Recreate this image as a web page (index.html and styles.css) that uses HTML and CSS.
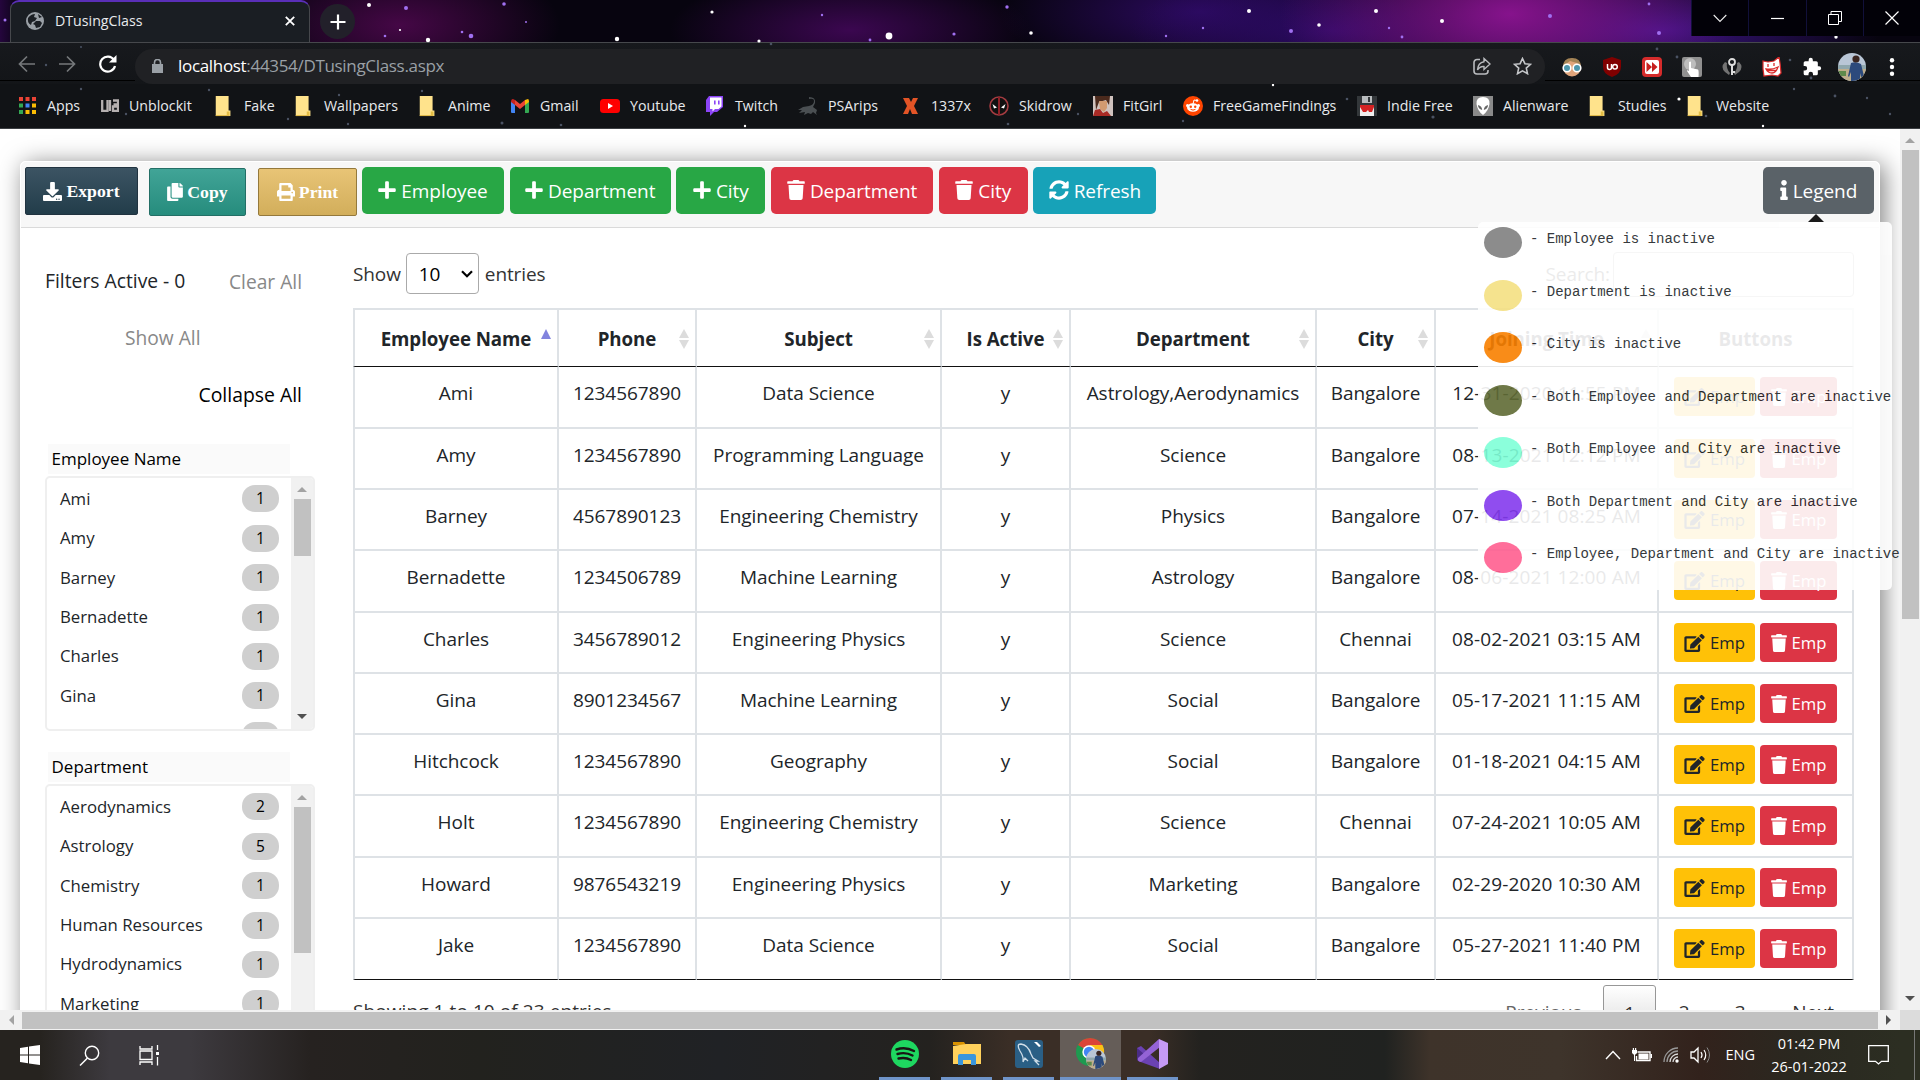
FILE: index.html
```
<!DOCTYPE html>
<html lang="en">
<head>
<meta charset="utf-8">
<title>DTusingClass</title>
<link rel="stylesheet" href="styles.css">
</head>
<body>
<svg class="defs" width="0" height="0" aria-hidden="true">
  <symbol id="plus" viewBox="0 0 448 512"><path d="M416 208H272V64c0-17.67-14.33-32-32-32h-32c-17.67 0-32 14.33-32 32v144H32c-17.67 0-32 14.33-32 32v32c0 17.67 14.33 32 32 32h144v144c0 17.67 14.33 32 32 32h32c17.67 0 32-14.33 32-32V304h144c17.67 0 32-14.33 32-32v-32c0-17.67-14.33-32-32-32z"/></symbol>
  <symbol id="trash" viewBox="0 0 448 512"><path d="M432 32H312l-9.4-18.7A24 24 0 0 0 281.1 0H166.8a23.72 23.72 0 0 0-21.4 13.3L136 32H16A16 16 0 0 0 0 48v32a16 16 0 0 0 16 16h416a16 16 0 0 0 16-16V48a16 16 0 0 0-16-16zM53.2 467a48 48 0 0 0 47.9 45h245.8a48 48 0 0 0 47.9-45L416 128H32z"/></symbol>
  <symbol id="sync" viewBox="0 0 512 512"><path d="M370.72 133.28C339.458 104.008 298.888 87.962 255.848 88c-77.458.068-144.328 53.178-162.791 126.85-1.344 5.363-6.122 9.15-11.651 9.15H24.103c-7.498 0-13.194-6.807-11.807-14.176C33.933 94.924 134.813 8 256 8c66.448 0 126.791 26.136 171.315 68.685L463.03 40.97C478.149 25.851 504 36.559 504 57.941V192c0 13.255-10.745 24-24 24H345.941c-21.382 0-32.09-25.851-16.971-40.971l41.75-41.749zM32 296h134.059c21.382 0 32.09 25.851 16.971 40.971l-41.75 41.75c31.262 29.273 71.835 45.319 114.876 45.28 77.418-.07 144.315-53.144 162.787-126.849 1.344-5.363 6.122-9.15 11.651-9.15h57.304c7.498 0 13.194 6.807 11.807 14.176C478.067 417.076 377.187 504 256 504c-66.448 0-126.791-26.136-171.315-68.685L48.97 471.03C33.851 486.149 8 475.441 8 454.059V320c0-13.255 10.745-24 24-24z"/></symbol>
  <symbol id="info" viewBox="0 0 192 512"><path d="M20 424.229h20V279.771H20c-11.046 0-20-8.954-20-20V212c0-11.046 8.954-20 20-20h112c11.046 0 20 8.954 20 20v212.229h20c11.046 0 20 8.954 20 20V492c0 11.046-8.954 20-20 20H20c-11.046 0-20-8.954-20-20v-47.771c0-11.046 8.954-20 20-20zM96 0C56.235 0 24 32.235 24 72s32.235 72 72 72 72-32.235 72-72S135.764 0 96 0z"/></symbol>
  <symbol id="download" viewBox="0 0 512 512"><path d="M216 0h80c13.3 0 24 10.7 24 24v168h87.7c17.8 0 26.7 21.5 14.1 34.1L269.7 378.3c-7.5 7.5-19.8 7.5-27.3 0L90.1 226.1c-12.6-12.6-3.7-34.1 14.1-34.1H192V24c0-13.3 10.7-24 24-24zm296 376v112c0 13.3-10.7 24-24 24H24c-13.3 0-24-10.7-24-24V376c0-13.3 10.7-24 24-24h146.7l49 49c20.1 20.1 52.5 20.1 72.6 0l49-49H488c13.3 0 24 10.7 24 24zm-124 88c0-11-9-20-20-20s-20 9-20 20 9 20 20 20 20-9 20-20zm64 0c0-11-9-20-20-20s-20 9-20 20 9 20 20 20 20-9 20-20z"/></symbol>
  <symbol id="copy" viewBox="0 0 448 512"><path d="M320 448v40c0 13.255-10.745 24-24 24H24c-13.255 0-24-10.745-24-24V120c0-13.255 10.745-24 24-24h72v296c0 30.879 25.121 56 56 56h168zm0-344V0H152c-13.255 0-24 10.745-24 24v368c0 13.255 10.745 24 24 24h272c13.255 0 24-10.745 24-24V128H344c-13.2 0-24-10.8-24-24zm120.971-31.029L375.029 7.029A24 24 0 0 0 358.059 0H352v96h96v-6.059a24 24 0 0 0-7.029-16.97z"/></symbol>
  <symbol id="print" viewBox="0 0 512 512"><path d="M448 192V77.25c0-8.49-3.37-16.62-9.37-22.63L393.37 9.37c-6-6-14.14-9.37-22.63-9.37H96C78.33 0 64 14.33 64 32v160c-35.35 0-64 28.65-64 64v112c0 8.84 7.16 16 16 16h48v96c0 17.67 14.33 32 32 32h320c17.67 0 32-14.33 32-32v-96h48c8.84 0 16-7.16 16-16V256c0-35.35-28.65-64-64-64zm-64 256H128v-96h256v96zm0-224H128V64h192v48c0 8.84 7.16 16 16 16h48v96zm48 72c-13.25 0-24-10.75-24-24 0-13.26 10.75-24 24-24s24 10.74 24 24c0 13.25-10.75 24-24 24z"/></symbol>
  <symbol id="edit" viewBox="0 0 576 512"><path d="M402.6 83.2l90.2 90.2c3.8 3.8 3.8 10 0 13.8L274.4 405.6l-92.8 10.3c-12.4 1.4-22.9-9.1-21.5-21.5l10.3-92.8L388.8 83.2c3.8-3.8 10-3.8 13.8 0zm162-22.9l-48.8-48.8c-15.2-15.2-39.9-15.2-55.2 0l-35.4 35.4c-3.8 3.8-3.8 10 0 13.8l90.2 90.2c3.8 3.8 10 3.8 13.8 0l35.4-35.4c15.2-15.3 15.2-40 0-55.2zM384 346.2V448H64V128h229.8c3.2 0 6.2-1.3 8.5-3.5l40-40c7.6-7.6 2.2-20.5-8.5-20.5H48C21.5 64 0 85.5 0 112v352c0 26.5 21.5 48 48 48h352c26.5 0 48-21.5 48-48V306.2c0-10.7-12.9-16-20.5-8.5l-40 40c-2.2 2.3-3.5 5.3-3.5 8.5z"/></symbol>
  <symbol id="folder" viewBox="0 0 20 24"><path d="M1 1h14v16h2v6H1z" fill="#ffe38c"/><path d="M13 22v-4h3v4z" fill="#e3bd45"/><path d="M1 22h15v1H1z" fill="#d9b03c"/></symbol>
  <symbol id="avatar" viewBox="0 0 28 28"><clipPath id="round"><circle cx="14" cy="14" r="14"/></clipPath><g clip-path="url(#round)"><path fill="#b9c6d6" d="M0 0h28v28H0z"/><path fill="#8fa7ad" d="M0 12h28v4H0z"/><path fill="#bfae8c" d="M0 16h28v12H0z"/><path fill="#5f8a4c" d="M0 18h8v5H0z"/><path fill="#2c4a7c" d="M13 10q5-2 10 1l3 12-3 1-1-4v8h-9v-9l-2 5-1-1z"/><circle cx="18" cy="6" r="3.6" fill="#3a2520"/></g></symbol>
</svg>

<header class="chrome">
  <svg class="sky" viewBox="0 0 1920 129" width="1920" height="129" aria-hidden="true">
    <g fill="#fff">
      <circle cx="369" cy="5" r="2"/><circle cx="428" cy="40" r="2.2"/><circle cx="617" cy="39" r="2.2"/><circle cx="712" cy="12" r="1.6"/><circle cx="759" cy="41" r="1.6"/><circle cx="889" cy="36" r="3.4"/><circle cx="1031" cy="33" r="1.8"/><circle cx="1249" cy="11" r="2"/><circle cx="1319" cy="25" r="1.8"/><circle cx="1376" cy="11" r="2"/><circle cx="1442" cy="21" r="2"/><circle cx="1836" cy="37" r="1.7"/><circle cx="400" cy="30" r="1.1"/><circle cx="1273" cy="85" r="1.2"/><circle cx="1679" cy="99" r="1.6"/><circle cx="745" cy="126" r="1.2"/><circle cx="1763" cy="126" r="1.2"/>
    </g>
    <g fill="#a070f0">
      <circle cx="406" cy="8" r="2"/><circle cx="471" cy="36" r="2.3"/><circle cx="462" cy="32" r="1.3"/><circle cx="504" cy="4" r="1.8"/><circle cx="385" cy="36" r="1.3"/><circle cx="526" cy="22" r="1"/><circle cx="1007" cy="7" r="1.7"/><circle cx="954" cy="34" r="1.6"/><circle cx="822" cy="15" r="1.2"/><circle cx="870" cy="40" r="1.4"/><circle cx="1291" cy="31" r="2"/><circle cx="1550" cy="16" r="2"/><circle cx="1659" cy="33" r="2"/><circle cx="1649" cy="4" r="1.4"/><circle cx="1402" cy="37" r="1.4"/><circle cx="1389" cy="28" r="1.2"/><circle cx="5" cy="20" r="1.5"/><circle cx="1203" cy="28" r="1.2"/><circle cx="1166" cy="36" r="1.2"/>
    </g>
    <g fill="#4a5263">
      <circle cx="81" cy="47" r="1"/><circle cx="186" cy="5" r="1.2"/><circle cx="46" cy="65" r="1.2"/><circle cx="81" cy="89" r="1.2"/><circle cx="209" cy="90" r="1.2"/><circle cx="126" cy="114" r="1.2"/><circle cx="288" cy="119" r="1.2"/><circle cx="348" cy="124" r="1.2"/><circle cx="502" cy="123" r="1.5"/><circle cx="561" cy="125" r="1.3"/><circle cx="771" cy="44" r="1.3"/><circle cx="1008" cy="124" r="1.3"/><circle cx="1078" cy="114" r="1.2"/><circle cx="1183" cy="121" r="1.2"/><circle cx="1347" cy="99" r="1.3"/><circle cx="1433" cy="117" r="1.6"/><circle cx="1657" cy="49" r="1.4"/><circle cx="1677" cy="57" r="1.4"/><circle cx="1790" cy="60" r="1.3"/><circle cx="1811" cy="78" r="1.4"/><circle cx="1835" cy="96" r="1.4"/><circle cx="1867" cy="98" r="1.2"/><circle cx="1890" cy="114" r="1.2"/><circle cx="1794" cy="89" r="1.2"/><circle cx="422" cy="91" r="1.2"/><circle cx="339" cy="95" r="1.2"/><circle cx="1706" cy="116" r="1.3"/>
    </g>
  </svg>
  <div class="tabstrip">
    <div class="tab">
      <svg width="18" height="18" viewBox="0 0 18 18"><circle cx="9" cy="9" r="9" fill="#9aa0a6"/><path d="M2 6q3-4 7-4l-1 3 3 1-2 3-3 1-1 3q-4-2-3-7zM10 9l4 0 2 2-2 4-4 1-1-3-2-1zM12 2l4 3-3 1z" fill="#1b1f24"/></svg>
      <span>DTusingClass</span>
      <svg width="10" height="10" viewBox="0 0 10 10"><path d="M.8.8l8.4 8.4M9.2.8L.8 9.2" stroke="#fff" stroke-width="1.8"/></svg>
    </div>
    <div class="newtab"><svg width="16" height="16" viewBox="0 0 16 16"><path d="M8 .5v15M.5 8h15" stroke="#fff" stroke-width="2.2"/></svg></div>
    <div class="winctl">
      <span><svg width="14" height="9" viewBox="0 0 14 9"><path d="M.7 1l6.3 6.500L13.300 1" fill="none" stroke="#eee" stroke-width="1.100"/></svg></span>
      <span><svg width="13" height="9" viewBox="0 0 13 9"><path d="M0 4.500h13" stroke="#fff" stroke-width="1.200"/></svg></span>
      <span><svg width="14" height="14" viewBox="0 0 14 14"><path d="M.5 3.500h10v10H.5zM3 3V.5h10.500v10H11" fill="none" stroke="#fff"/></svg></span>
      <span><svg width="14" height="14" viewBox="0 0 14 14"><path d="M.5.5l13 13M13.500.5l-13 13" stroke="#fff" stroke-width="1.200"/></svg></span>
    </div>
  </div>
  <div class="toolbar">
    <div class="nav">
      <svg width="18" height="18" viewBox="0 0 18 18"><path d="M17 9H2M9 1.500L1.500 9 9 16.500" fill="none" stroke="#75787b" stroke-width="1.700"/></svg>
      <svg width="18" height="18" viewBox="0 0 18 18"><path d="M1 9h15M9 1.500L16.500 9 9 16.500" fill="none" stroke="#75787b" stroke-width="1.700"/></svg>
      <svg width="19" height="18" viewBox="0 0 19 18"><path d="M16 5A7.500 7.500 0 1 0 17 11" fill="none" stroke="#fff" stroke-width="2.200"/><path d="M18.500 0v7.500H11z" fill="#fff"/></svg>
    </div>
    <div class="url">
      <svg width="11" height="14" viewBox="0 0 11 14"><path d="M0 5h11v9H0z" fill="#9aa0a6"/><path d="M2.500 6V3.500a3 3 0 0 1 6 0V6" fill="none" stroke="#9aa0a6" stroke-width="1.600"/></svg>
      <p><b>localhost</b>:44354/DTusingClass.aspx</p>
      <svg width="18" height="18" viewBox="0 0 18 18"><path d="M7 2.500H4a3 3 0 0 0-3 3V14a3 3 0 0 0 3 3h8a3 3 0 0 0 3-3v-1" fill="none" stroke="#b9bbbe" stroke-width="1.600"/><path d="M11 1.500L17 7l-6 5.500V9.500Q7 9 4.500 13 5 5.500 11 4.700z" fill="none" stroke="#b9bbbe" stroke-width="1.400"/></svg>
      <svg width="19" height="18" viewBox="0 0 19 18"><path d="M9.500 1.500l2.400 5.200 5.600.6-4.200 3.800 1.200 5.600-5-2.900-5 2.900 1.200-5.600L1.500 7.300l5.600-.6z" fill="none" stroke="#c4c6c9" stroke-width="1.600"/></svg>
    </div>
    <div class="exts">
      <svg width="20" height="20" viewBox="0 0 20 20"><circle cx="10" cy="10.500" r="9" fill="#e0a57c"/><path d="M1 10Q1 1 10 1t9 9l-4-4-7-2-4 3z" fill="#a38355"/><circle cx="5" cy="11" r="3.800" fill="#4d97ad" stroke="#fff" stroke-width="1.600"/><circle cx="15" cy="11" r="3.800" fill="#4d97ad" stroke="#fff" stroke-width="1.600"/></svg>
      <svg width="20" height="20" viewBox="0 0 20 20"><path d="M10 0l9 3v7q0 7-9 10Q1 17 1 10V3z" fill="#800000"/><path d="M5.500 7v3.500a2 2 0 0 0 4 0V7" fill="none" stroke="#fff" stroke-width="1.500"/><circle cx="13" cy="9.800" r="2.300" fill="none" stroke="#fff" stroke-width="1.500"/></svg>
      <svg width="20" height="20" viewBox="0 0 20 20"><rect width="20" height="20" rx="4" fill="#d52b2b"/><rect x="3" y="3" width="14" height="14" rx="2" fill="#fff"/><path d="M4.500 5l5.500 5-5.500 5zM10 5l5.500 5-5.500 5z" fill="#c62020"/></svg>
      <svg width="20" height="20" viewBox="0 0 20 20"><rect width="20" height="20" rx="2" fill="#909090"/><circle cx="8" cy="7" r="6" fill="#bdbdbd"/><path d="M7 5q1.500-1 2 0v6l7 1.500q1 1 .5 7.500H9l-4-6q0-1.500 2 0z" fill="#fff"/></svg>
      <svg width="20" height="20" viewBox="0 0 20 20"><path d="M3 5Q-2 10 3 15l4 3 1-2Q4 12 5 6zM17 5q5 5 0 10l-4 3-1-2q4-4 3-10z" fill="#737373"/><circle cx="10" cy="5" r="3" fill="none" stroke="#ddd" stroke-width="1.800"/><path d="M10 8v10M10 15h3" stroke="#ddd" stroke-width="2"/></svg>
      <svg width="20" height="20" viewBox="0 0 20 20"><path d="M1 4l5 1 6-1 5-4 1 6 1 10-3 3-6-1-8 1-1-7z" fill="#fff" stroke="#d92a2a" stroke-width="1.200"/><path d="M6 7v3M12 6v3M4 12q6 1 12-2-2 6-6 6-4 0-6-4zM5 13.500h9" fill="none" stroke="#d92a2a" stroke-width="1.300"/></svg>
      <svg width="20" height="20" viewBox="0 0 24 24"><path d="M20.500 11H19V7a2 2 0 0 0-2-2h-4V3.500a2.500 2.500 0 0 0-5 0V5H4a2 2 0 0 0-2 2v3.800h1.500a2.700 2.700 0 0 1 0 5.400H2V20a2 2 0 0 0 2 2h3.800v-1.500a2.700 2.700 0 0 1 5.400 0V22H17a2 2 0 0 0 2-2v-4h1.500a2.500 2.500 0 0 0 0-5z" fill="#fff"/></svg>
      <svg width="28" height="28"><use href="#avatar"/></svg>
      <svg width="6" height="18" viewBox="0 0 6 18"><g fill="#fff"><circle cx="3" cy="2.300" r="2.200"/><circle cx="3" cy="9" r="2.200"/><circle cx="3" cy="15.700" r="2.200"/></g></svg>
    </div>
  </div>
  <nav class="bookmarks">
    <a><svg width="18" height="18" viewBox="0 0 18 18"><path fill="#ea4335" d="M0 0h4v4H0zM6.500 0h4v4h-4zM13 0h4v4h-4z"/><path fill="#34a853" d="M0 6.500h4v4H0zM0 13h4v4H0z"/><path fill="#4285f4" d="M6.500 6.500h4v4h-4z"/><path fill="#fbbc04" d="M13 6.500h4v4h-4zM6.500 13h4v4h-4zM13 13h4v4h-4z"/></svg>Apps</a>
    <a><svg width="18" height="14" viewBox="0 0 18 14"><path d="M1.200 1v10.800h5.300V1M9 1v11M12 1.500h5v4h-4.500M12 7.500h5v4.300h-5z" fill="none" stroke="#b5b0b0" stroke-width="2.300"/></svg>Unblockit</a>
    <a><svg width="20" height="22"><use href="#folder"/></svg>Fake</a>
    <a><svg width="20" height="22"><use href="#folder"/></svg>Wallpapers</a>
    <a><svg width="20" height="22"><use href="#folder"/></svg>Anime</a>
    <a><svg width="20" height="14" viewBox="0 0 20 14"><path fill="#4285f4" d="M1 2l4 3v9H2q-1 0-1-1z"/><path fill="#34a853" d="M19 2l-4 3v9h3q1 0 1-1z"/><path fill="#fbbc04" d="M15 1l3-1q1 0 1 3l-4 3z"/><path fill="#c5221f" d="M1 3q0-3 2-3l2 1v5z"/><path fill="#ea4335" d="M5 1l5 4 5-4v5l-5 4-5-4z"/></svg>Gmail</a>
    <a><svg width="20" height="14" viewBox="0 0 20 14"><rect width="20" height="14" rx="3.500" fill="#f00"/><path d="M8 4l5 3-5 3z" fill="#fff"/></svg>Youtube</a>
    <a><svg width="20" height="20" viewBox="0 0 20 20"><path d="M4 0L1 4v12h4v4l4-4h3l6-5V0z" fill="#8c44f7"/><path d="M5 1.500h11.500v9L13.500 13H10l-2.500 2.500V13H5z" fill="#fff"/><path d="M9 4.500h1.600v4H9zM13 4.500h1.600v4H13z" fill="#8c44f7"/></svg>Twitch</a>
    <a><svg width="20" height="20" viewBox="0 0 20 20"><path d="M11 1q7 0 6 6l-2 4 4 3-1 3 1 2-4-3-2 2-3-1-4 2 1-3-6 1 3-3-4 0 5-3 6-1q5-1 5-5 0-3-5-2z" fill="#4a4f52"/></svg>PSArips</a>
    <a><svg width="20" height="18" viewBox="0 0 20 18"><path d="M2 1h6l2 4 2-4h5l-4 8 4 8h-6l-2-5-2 5H2l4-8z" fill="#e35426"/></svg>1337x</a>
    <a><svg width="20" height="20" viewBox="0 0 20 20"><circle cx="10" cy="10" r="9" fill="#111" stroke="#a33b40" stroke-width="1.600"/><path d="M9 1h2v18H9z" fill="#8e2027"/><path d="M3.500 8l4.500 3.500-3 1zM16.500 8L12 11.500l3 1z" fill="#fff"/></svg>Skidrow</a>
    <a><svg width="20" height="20" viewBox="0 0 20 20"><path fill="#cfc2be" d="M0 0h20v20H0z"/><path fill="#4b2a1d" d="M2 0h15l-1 9-3-5-7 2-3 8z"/><path fill="#d29a70" d="M6 5l8 0 0 7-3 4-4-3z"/><path fill="#a82a25" d="M0 20l2-6 5-1 3 4 4-2 4 5z"/></svg>FitGirl</a>
    <a><svg width="20" height="20" viewBox="0 0 20 20"><circle cx="10" cy="10" r="10" fill="#ff4500"/><ellipse cx="10" cy="11.500" rx="6" ry="4.300" fill="#fff"/><circle cx="4.500" cy="9.500" r="1.500" fill="#fff"/><circle cx="15.500" cy="9.500" r="1.500" fill="#fff"/><circle cx="14" cy="4.500" r="1.300" fill="#fff"/><path d="M10 8l1-4 3 .5" fill="none" stroke="#fff"/><circle cx="7.800" cy="10.700" r="1.200" fill="#ff4500"/><circle cx="12.200" cy="10.700" r="1.200" fill="#ff4500"/><path d="M7.500 13.300q2.500 1.600 5 0" fill="none" stroke="#ff4500"/></svg>FreeGameFindings</a>
    <a><svg width="20" height="20" viewBox="0 0 20 20"><path fill="#33373a" d="M0 0h20v20H0z"/><path fill="#b9bcbe" d="M5 0h10v7H5z"/><path fill="#33373a" d="M11 1h2v5h-2z"/><path fill="#eee" d="M3 10h14v10H3z"/><path fill="#d42323" d="M3 9h14v2l-2 5h-3l-1-2-2 2H6l-3-5z"/></svg>Indie Free</a>
    <a><svg width="20" height="20" viewBox="0 0 20 20"><path fill="#8a8a8a" d="M0 0h20v20H0z"/><path fill="#fff" d="M10 1q7 0 6.500 7-1 7-6.500 11Q4.500 15 3.500 8 3 1 10 1z"/><path fill="#666" d="M5 9q4 1 4.200 5Q5 13 5 9zM15 9q-4 1-4.200 5Q15 13 15 9z"/></svg>Alienware</a>
    <a><svg width="20" height="22"><use href="#folder"/></svg>Studies</a>
    <a><svg width="20" height="22"><use href="#folder"/></svg>Website</a>
  </nav>
</header>

<div class="viewport">
  <main class="page">
    <section class="card">
      <div class="card-head">
        <button class="dt export"><svg width="19" height="19"><use href="#download"/></svg>Export</button>
        <button class="dt copy"><svg width="16" height="18"><use href="#copy"/></svg>Copy</button>
        <button class="dt print"><svg width="18" height="18"><use href="#print"/></svg>Print</button>
        <button class="btn green w142"><svg width="18" height="20"><use href="#plus"/></svg>Employee</button>
        <button class="btn green w161"><svg width="18" height="20"><use href="#plus"/></svg>Department</button>
        <button class="btn green w89"><svg width="18" height="20"><use href="#plus"/></svg>City</button>
        <button class="btn red w162"><svg width="18" height="20"><use href="#trash"/></svg>Department</button>
        <button class="btn red w89"><svg width="18" height="20"><use href="#trash"/></svg>City</button>
        <button class="btn teal w123"><svg width="20" height="20"><use href="#sync"/></svg>Refresh</button>
        <div class="legend-wrap">
          <button class="btn gray"><svg width="8" height="20"><use href="#info"/></svg>Legend</button>
          <div class="legend">
            <p><i class="dot c1"></i>- Employee is inactive</p>
            <p><i class="dot c2"></i>- Department is inactive</p>
            <p><i class="dot c3"></i>- City is inactive</p>
            <p><i class="dot c4"></i>- Both Employee and Department are inactive</p>
            <p><i class="dot c5"></i>- Both Employee and City are inactive</p>
            <p><i class="dot c6"></i>- Both Department and City are inactive</p>
            <p><i class="dot c7"></i>- Employee, Department and City are inactive</p>
          </div>
        </div>
      </div>
      <div class="card-body">
        <aside class="panes">
          <div class="pane-top"><span class="active">Filters Active - 0</span><span class="muted">Clear All</span></div>
          <div class="show-all muted">Show All</div>
          <div class="collapse-all">Collapse All</div>
          <h3>Employee Name</h3>
          <div class="pane">
            <ul>
              <li>Ami<b>1</b></li><li>Amy<b>1</b></li><li>Barney<b>1</b></li><li>Bernadette<b>1</b></li><li>Charles<b>1</b></li><li>Gina<b>1</b></li><li>Hitchcock<b>1</b></li>
            </ul>
            <div class="bar"><i class="up"></i><i class="thumb t1"></i><i class="down"></i></div>
          </div>
          <h3>Department</h3>
          <div class="pane">
            <ul>
              <li>Aerodynamics<b>2</b></li><li>Astrology<b>5</b></li><li>Chemistry<b>1</b></li><li>Human Resources<b>1</b></li><li>Hydrodynamics<b>1</b></li><li>Marketing<b>1</b></li><li>Physics<b>1</b></li>
            </ul>
            <div class="bar"><i class="up"></i><i class="thumb t2"></i><i class="down"></i></div>
          </div>
        </aside>
        <div class="main">
          <div class="controls">
            <span>Show</span>
            <span class="select">10<svg width="12" height="8" viewBox="0 0 12 8"><path d="M1 1.200l5 5 5-5" fill="none" stroke="#000" stroke-width="2.200"/></svg></span>
            <span>entries</span>
            <span class="search">Search:<i class="input"></i></span>
          </div>
          <table>
            <colgroup><col class="k1"><col class="k2"><col class="k3"><col class="k4"><col class="k5"><col class="k6"><col class="k7"><col class="k8"></colgroup>
            <thead><tr>
              <th><div class="asc">Employee Name</div></th><th><div class="sort">Phone</div></th><th><div class="sort">Subject</div></th><th><div class="sort">Is Active</div></th><th><div class="sort">Department</div></th><th><div class="sort">City</div></th><th><div class="sort">Joining Time</div></th><th><div>Buttons</div></th>
            </tr></thead>
            <tbody>
              <tr><td>Ami</td><td>1234567890</td><td>Data Science</td><td>y</td><td>Astrology,Aerodynamics</td><td>Bangalore</td><td>12-31-2020 11:55 PM</td><td><div class="acts"><button class="sm yellow"><svg width="21" height="18"><use href="#edit"/></svg>Emp</button><button class="sm red"><svg width="16" height="18"><use href="#trash"/></svg>Emp</button></div></td></tr>
              <tr><td>Amy</td><td>1234567890</td><td>Programming Language</td><td>y</td><td>Science</td><td>Bangalore</td><td>08-13-2021 12:12 PM</td><td><div class="acts"><button class="sm yellow"><svg width="21" height="18"><use href="#edit"/></svg>Emp</button><button class="sm red"><svg width="16" height="18"><use href="#trash"/></svg>Emp</button></div></td></tr>
              <tr><td>Barney</td><td>4567890123</td><td>Engineering Chemistry</td><td>y</td><td>Physics</td><td>Bangalore</td><td>07-14-2021 08:25 AM</td><td><div class="acts"><button class="sm yellow"><svg width="21" height="18"><use href="#edit"/></svg>Emp</button><button class="sm red"><svg width="16" height="18"><use href="#trash"/></svg>Emp</button></div></td></tr>
              <tr><td>Bernadette</td><td>1234506789</td><td>Machine Learning</td><td>y</td><td>Astrology</td><td>Bangalore</td><td>08-06-2021 12:00 AM</td><td><div class="acts"><button class="sm yellow"><svg width="21" height="18"><use href="#edit"/></svg>Emp</button><button class="sm red"><svg width="16" height="18"><use href="#trash"/></svg>Emp</button></div></td></tr>
              <tr><td>Charles</td><td>3456789012</td><td>Engineering Physics</td><td>y</td><td>Science</td><td>Chennai</td><td>08-02-2021 03:15 AM</td><td><div class="acts"><button class="sm yellow"><svg width="21" height="18"><use href="#edit"/></svg>Emp</button><button class="sm red"><svg width="16" height="18"><use href="#trash"/></svg>Emp</button></div></td></tr>
              <tr><td>Gina</td><td>8901234567</td><td>Machine Learning</td><td>y</td><td>Social</td><td>Bangalore</td><td>05-17-2021 11:15 AM</td><td><div class="acts"><button class="sm yellow"><svg width="21" height="18"><use href="#edit"/></svg>Emp</button><button class="sm red"><svg width="16" height="18"><use href="#trash"/></svg>Emp</button></div></td></tr>
              <tr><td>Hitchcock</td><td>1234567890</td><td>Geography</td><td>y</td><td>Social</td><td>Bangalore</td><td>01-18-2021 04:15 AM</td><td><div class="acts"><button class="sm yellow"><svg width="21" height="18"><use href="#edit"/></svg>Emp</button><button class="sm red"><svg width="16" height="18"><use href="#trash"/></svg>Emp</button></div></td></tr>
              <tr><td>Holt</td><td>1234567890</td><td>Engineering Chemistry</td><td>y</td><td>Science</td><td>Chennai</td><td>07-24-2021 10:05 AM</td><td><div class="acts"><button class="sm yellow"><svg width="21" height="18"><use href="#edit"/></svg>Emp</button><button class="sm red"><svg width="16" height="18"><use href="#trash"/></svg>Emp</button></div></td></tr>
              <tr><td>Howard</td><td>9876543219</td><td>Engineering Physics</td><td>y</td><td>Marketing</td><td>Bangalore</td><td>02-29-2020 10:30 AM</td><td><div class="acts"><button class="sm yellow"><svg width="21" height="18"><use href="#edit"/></svg>Emp</button><button class="sm red"><svg width="16" height="18"><use href="#trash"/></svg>Emp</button></div></td></tr>
              <tr><td>Jake</td><td>1234567890</td><td>Data Science</td><td>y</td><td>Social</td><td>Bangalore</td><td>05-27-2021 11:40 PM</td><td><div class="acts"><button class="sm yellow"><svg width="21" height="18"><use href="#edit"/></svg>Emp</button><button class="sm red"><svg width="16" height="18"><use href="#trash"/></svg>Emp</button></div></td></tr>
            </tbody>
          </table>
          <div class="foot">
            <span>Showing 1 to 10 of 23 entries</span>
            <div class="pager"><span class="prev">Previous</span><span class="cur">1</span><span class="pg">2</span><span class="pg">3</span><span class="next">Next</span></div>
          </div>
        </div>
      </div>
    </section>
  </main>
  <div class="vbar"><i class="up"></i><i class="vthumb"></i><i class="down"></i></div>
  <div class="hbar"><i class="left"></i><i class="hthumb"></i><i class="right"></i></div>
  <div class="corner"></div>
</div>

<footer class="taskbar">
  <div class="tb-left">
    <svg width="20" height="20" viewBox="0 0 20 20"><path d="M0 3l8-1.200v7.700H0zM9 1.600L20 0v9.500H9zM0 10.500h8v7.700L0 17zM9 10.500h11V20L9 18.400z" fill="#fff"/></svg>
    <svg width="21" height="21" viewBox="0 0 21 21"><circle cx="13" cy="8" r="6.700" fill="none" stroke="#fff" stroke-width="1.400"/><path d="M8.500 13L1 20.500" stroke="#fff" stroke-width="1.500"/></svg>
    <svg width="21" height="21" viewBox="0 0 21 21"><path d="M1 1v3h12V1M1 20v-3h12v3M1 6h12v8.500H1zM18.500 0v5M18.500 12v8.500" fill="none" stroke="#fff" stroke-width="1.300"/><path d="M17 7h3v3h-3z" fill="#fff"/></svg>
  </div>
  <div class="apps">
    <span class="app"><svg width="28" height="28" viewBox="0 0 28 28"><circle cx="14" cy="14" r="14" fill="#1ed760"/><path d="M5.500 9.500q9-3 17.500 1.500M6.500 14q8-2.300 15 1.500M7.500 18.500q7-1.600 12.500 1.500" fill="none" stroke="#191414" stroke-width="2.400" stroke-linecap="round"/></svg></span>
    <span class="app"><svg width="28" height="24" viewBox="0 0 28 24"><path d="M0 0h11l2 3H0z" fill="#d99200"/><path d="M0 4l13-2h15v20H0z" fill="#ffd15c"/><path d="M5 23V14q0-2 2-2h14q2 0 2 2v9h-5v-5h-8v5z" fill="#3a96dd"/></svg></span>
    <span class="app"><svg width="28" height="28" viewBox="0 0 28 28"><rect width="28" height="28" rx="3" fill="#2a5f85"/><path d="M8 22Q9 17 5 11 1 4 6 4q7 1 10 10l2 4 5 3-3 0 4 4M8 22l2-4 3 3" fill="none" stroke="#cfdde8" stroke-width="1.300"/><path d="M19 2l5 5 2-1-4-4z" fill="#fff"/></svg></span>
    <span class="app on"><svg width="32" height="31" viewBox="0 0 32 31"><circle cx="15" cy="14" r="14" fill="#1e9a50"/><path d="M15 14L3 7Q7 0 15 0t12.500 7z" fill="#db4437"/><path d="M15 14l0-7h12.500Q31 14 27 21l-8 7z" fill="#fbc116"/><circle cx="14" cy="14" r="6.700" fill="#fff"/><circle cx="14" cy="14" r="5.200" fill="#4285f4"/><svg x="11" y="11" width="20" height="20"><use href="#avatar"/></svg></svg></span>
    <span class="app"><svg width="31" height="30" viewBox="0 0 31 30"><path d="M0 9l4-2 19 17v6L1 22z" fill="#6b42b3"/><path d="M0 9l7 6-7 7z" fill="#4a2c86"/><path d="M22 0L1 19q-1 3 3 4L23 8z" fill="#9463d6"/><path d="M22 0l9 4v21l-9 5z" fill="#c69af5"/></svg></span>
  </div>
  <div class="tray">
    <svg width="16" height="10" viewBox="0 0 16 10"><path d="M1 9l7-7.500L15 9" fill="none" stroke="#fff" stroke-width="1.400"/></svg>
    <svg width="20" height="14" viewBox="0 0 20 14"><path d="M5.500 4h12.500v8.500H4.500V8" fill="none" stroke="#fff" stroke-width="1.400"/><path d="M6.500 5.500h10v6h-10zM18.500 6H20v4h-1.500zM0 2h5v3L3.500 6.500h-2L0 5zM.8 0H2v2H.8zM3 0h1.200v2H3zM2 6h1v7H2z" fill="#fff"/></svg>
    <svg width="16" height="16" viewBox="0 0 16 16"><g fill="none" stroke="#ddd" stroke-width="1.300"><path d="M10 15a5 5 0 0 1 5-5M7 15a8 8 0 0 1 8-8"/><path d="M4 15A11 11 0 0 1 15 4M1 15A14 14 0 0 1 15 1" stroke="#999"/></g><circle cx="14" cy="14" r="1.700" fill="#fff"/></svg>
    <svg width="21" height="18" viewBox="0 0 21 18"><path d="M1 6h3l4-4v14l-4-4H1z" fill="none" stroke="#fff" stroke-width="1.300"/><path d="M11 6q2 3 0 6M14 4q3.500 5 0 10" fill="none" stroke="#fff" stroke-width="1.200"/><path d="M17 1.500q5 7.500 0 15" fill="none" stroke="#888"/></svg>
    <span class="lang">ENG</span>
    <div class="clock"><span>01:42 PM</span><span>26-01-2022</span></div>
    <svg class="note" width="21" height="20" viewBox="0 0 21 20"><path d="M.7.7h19.600v15.600H13.500L10.500 19l-3-2.700H.7z" fill="none" stroke="#fff" stroke-width="1.300"/></svg>
  </div>
</footer>
</body>
</html>
```
FILE: styles.css
```
* { box-sizing: border-box; }
body {
  margin: 0;
  width: 1920px;
  height: 1080px;
  overflow: hidden;
  display: flex;
  flex-direction: column;
  background: #fff;
  color: #212529;
  font: 19px/30px "Open Sans", "Noto Sans", sans-serif;
}
p, h3, ul { margin: 0; padding: 0; }
svg { display: block; flex: none; }
.defs { position: absolute; }
button { font: inherit; margin: 0; padding: 0; border: 0; }
button svg { fill: currentColor; }

/* browser window */
.chrome {
  position: relative;
  height: 129px;
  flex: none;
  color: #e8eaed;
  background:
    radial-gradient(230px 110px at 1510px 14px, #86138c, transparent),
    radial-gradient(200px 60px at 1330px 30px, #2b0a63, transparent),
    radial-gradient(200px 70px at 1200px 12px, #2c0a60, transparent),
    radial-gradient(180px 60px at 850px 30px, #3b0750, transparent),
    radial-gradient(160px 70px at 400px 25px, #450746, transparent),
    radial-gradient(220px 60px at 1660px 30px, #3b1485, transparent),
    #07040f;
}
.sky { position: absolute; left: 0; top: 0; z-index: 1; }
.tabstrip { display: flex; height: 42px; align-items: flex-start; background: linear-gradient(90deg, #25063d, transparent 20px); }
.tab {
  z-index: 2;
  display: flex;
  align-items: center;
  width: 300px;
  height: 42px;
  margin-left: 10px;
  padding: 0 14px 2px 15px;
  gap: 11px;
  background: #1a1e23;
  border: 1px solid #46484c;
  border-top: 2px solid #5a2fb8;
  border-bottom: 0;
  border-radius: 9px 9px 0 0;
  font-size: 14.200px;
}
.tab span { flex: 1; }
.newtab {
  width: 35px; height: 35px; margin: 4px 0 0 10px;
  border-radius: 50%;
  background: #22202a;
  display: grid; place-items: center;
}
.winctl { margin-left: auto; display: flex; height: 36px; z-index: 2; background: #020108; }
.winctl span { width: 57.250px; display: grid; place-items: center; border-left: 1px solid #11103a; }
.toolbar {
  height: 42px;
  display: flex;
  align-items: center;
  background: linear-gradient(#17191d, #131518);
  border-top: 1px solid #46484c;
}
.nav { width: 135px; display: flex; gap: 22px; padding-left: 18px; height: 33px; margin-top: 1px; padding-top: 7px; border-bottom: 1px solid #000; }
.url {
  z-index: 2;
  width: 1410px;
  height: 35px;
  margin-top: 5px;
  border-radius: 18px;
  background: #202124;
  display: flex;
  align-items: center;
  padding: 0 13px 0 17px;
  gap: 22px;
}
.url p { flex: 1; font-size: 17px; color: #9aa0a6; margin-left: -7px; letter-spacing: -.32px; }
.url b { font-weight: 400; color: #fff; }
.exts { flex: 1; display: grid; grid-template-columns: repeat(9, 40px); padding-left: 7px; padding-top: 5px; height: 33px; margin-top: 1px; align-items: center; justify-items: center; border-bottom: 1px solid #000; }
.bookmarks {
  height: 45px;
  display: grid;
  grid-template-columns: 82px 113px 80px 124px 92px 90px 105px 93px 103px 88px 104px 90px 174px 116px 115px 98px 100px;
  padding-left: 19px;
  align-items: center;
  background: #111316;
  border-bottom: 1px solid #3c3f43;
  font-size: 14.200px;
}
.bookmarks a { display: flex; align-items: center; gap: 10px; white-space: nowrap; }

/* scrolling area */
.viewport {
  height: 901px;
  flex: none;
  display: grid;
  grid-template-columns: 1900px 20px;
  grid-template-rows: 881px 20px;
}
.page { padding: 32px 20px 0; overflow: hidden; height: 881px; }
.vbar, .bar { background: #f1f1f1; display: flex; flex-direction: column; align-items: center; }
.hbar { background: #f1f1f1; display: flex; align-items: center; padding: 0 9px; justify-content: space-between; }
.hthumb { width: 1856px; height: 17px; background: #c1c1c1; }
.vthumb { width: 17px; height: 469px; margin-top: 7px; background: #c1c1c1; }
.corner { background: #dcdcdc; }
.up, .down { border: 5px solid transparent; }
.up { border-top: 0; border-bottom-color: #a3a3a3; margin-top: 9px; }
.down { border-bottom: 0; border-top-color: #505050; margin-top: auto; margin-bottom: 9px; }
.left, .right { border: 5px solid transparent; }
.left { border-left: 0; border-right-color: #a3a3a3; }
.right { border-right: 0; border-left-color: #505050; }

.card {
  width: 1860px;
  height: 1200px;
  border: 1px solid #fff;
  border-radius: 5px;
  background: #fff;
  box-shadow: 4px 3px 25px rgba(0, 0, 0, .5);
}
.card-head {
  height: 66px;
  display: flex;
  padding: 5px 5px 0 4px;
  background: #f7f7f7;
  border-bottom: 1px solid #dadada;
  border-radius: 5px 5px 0 0;
}
.btn {
  height: 47px;
  border-radius: 5px;
  color: #fff;
  display: flex;
  align-items: center;
  justify-content: center;
  gap: 5px;
  margin-left: 5.700px;
  letter-spacing: -.05px;
}
.btn svg { margin-top: -1px; }
.w142 { width: 142px; }
.w161 { width: 161px; }
.w89 { width: 89px; }
.w162 { width: 162px; }
.w123 { width: 123px; }
.green { background: #28a745; }
.red { background: #dc3545; }
.teal { background: #17a2b8; }
.gray { background: #5a6268; width: 111px; margin: 0; }
.dt {
  height: 48px;
  border-radius: 2px;
  border: 1px solid;
  color: #fff;
  font: bold 17.700px "Liberation Serif", serif;
  display: flex;
  align-items: center;
  justify-content: center;
  gap: 4px;
}
.export { width: 113px; background: linear-gradient(#3c5463, #223d4a); border-color: #213340; }
.copy { width: 97px; margin: 1px 0 0 11px; background: linear-gradient(#41a497, #268c7d); border-color: #236f66; }
.print { width: 99px; margin: 1px -.7px 0 12px; background: linear-gradient(#e8c476, #d2ae5b); border-color: #94793c; }

/* legend popover */
.legend-wrap { position: relative; margin-left: auto; }
.legend-wrap::after {
  content: "";
  position: absolute;
  top: 47px; left: 45px;
  border: 8px solid transparent;
  border-top: 0;
  border-bottom-color: #1a1a1a;
}
.legend {
  position: absolute;
  top: 55px; left: -285px;
  width: 414px; height: 368px;
  z-index: 3;
  padding: 5px 6px;
  border-radius: 5px;
  background: #fff;
  opacity: .9;
  color: #212529;
  font: 14px/24px "Liberation Mono", monospace;
  white-space: nowrap;
}
.legend p { display: flex; height: 52.500px; gap: 8px; }
.dot { width: 38px; height: 31px; border-radius: 50%; flex: none; }
.c1 { background: #808080; }
.c2 { background: #f5e082; }
.c3 { background: #f98000; }
.c4 { background: #606b35; }
.c5 { background: #7fffd8; }
.c6 { background: #843aee; }
.c7 { background: #ff5f90; }

.card-body { display: flex; }
.panes { width: 332px; padding-left: 24px; }
.pane-top { display: flex; justify-content: space-between; height: 54px; padding: 39px 51px 0 0; font-size: 19.300px; line-height: 30px; }
.active { margin-top: -1px; white-space: nowrap; }
.muted { color: #888; font-size: 19.200px; }
.show-all { padding: 41px 0 0 80px; }
.collapse-all { color: #000; padding: 27px 51px 0 0; text-align: right; font-size: 19.400px; }
.panes h3 {
  width: 242px; height: 30px;
  margin: 34px 0 0 2.500px;
  padding-left: 4px;
  background: #fafafa;
  color: #000;
  font-weight: 400;
  font-size: 17px;
  line-height: 29px;
}
.pane {
  width: 270px; height: 255px;
  margin-top: 2px;
  border: 2px solid #efefef;
  border-radius: 5px;
  display: flex;
  overflow: hidden;
}
.pane + h3 { margin-top: 21px; }
.pane ul { flex: 1; list-style: none; padding: 1px 12px 0 13px; font-size: 16.800px; }
.pane li { height: 39.450px; display: flex; align-items: center; justify-content: space-between; }
.pane b { width: 37px; height: 27px; border-radius: 13px; background: #cfcfcf; color: #000; font-weight: 400; font-size: 15.500px; line-height: 27px; text-align: center; }
.bar { width: 22px; height: 251px; }
.thumb { width: 17px; margin-top: 7px; background: #c1c1c1; }
.t1 { height: 57px; }
.t2 { height: 146px; }
.bar .down { margin-bottom: 10px; }

.main { width: 1501px; }
.controls { display: flex; align-items: center; height: 80px; padding-top: 12px; color: #333; }
.controls > span { letter-spacing: -.1px; }
.select {
  width: 73px; height: 41px;
  margin: -2px 6px 0 5px;
  padding: 2px 5px 0 12px;
  border: 1px solid #aaa;
  border-radius: 4px;
  color: #000;
  display: flex;
  align-items: center;
  justify-content: space-between;
}
.search { margin-left: auto; display: flex; align-items: center; gap: 3px; }
.input { width: 241px; height: 45px; border: 1px solid #aaa; border-radius: 4px; }

table { width: 1501px; table-layout: fixed; border-collapse: separate; border-spacing: 0; text-align: center; }
.k1 { width: 206px; } .k2 { width: 138px; } .k3 { width: 245px; } .k4 { width: 129px; }
.k5 { width: 246px; } .k6 { width: 119px; } .k7 { width: 223px; } .k8 { width: 195px; }
th, td { padding: 0; border-right: 2px solid #dee2e6; border-bottom: 2px solid #dee2e6; letter-spacing: -.05px; white-space: nowrap; }
th:first-child, td:first-child { border-left: 2px solid #dee2e6; }
th { height: 59px; border-top: 2px solid #dee2e6; border-bottom: 1px solid #111; font-weight: 700; font-size: 18.700px; letter-spacing: -.05px; }
th div { position: relative; height: 56px; line-height: 58px; }
.asc::before, .sort::before, .sort::after { content: ""; position: absolute; right: 6px; border: 5px solid transparent; }
.asc::before { top: 19px; border-top: 0; border-bottom: 10px solid #8284de; }
.sort::before { top: 19px; border-top: 0; border-bottom: 9px solid #dcdcdc; }
.sort::after { top: 30px; border-bottom: 0; border-top: 9px solid #dcdcdc; }
td { height: 61px; vertical-align: top; padding-top: 11px; line-height: 30px; }
td:nth-child(7) { letter-spacing: .13px; }
tbody tr:nth-child(1) td, tbody tr:nth-child(4) td, tbody tr:nth-child(8) td { height: 62px; }
tbody tr:last-child td { border-bottom: 1px solid #111; }
td:last-child { padding-top: 10px; }
.acts { display: flex; padding-left: 15px; gap: 5px; }
.sm { height: 39px; border-radius: 4px; display: flex; align-items: center; justify-content: center; gap: 5px; font-size: 16.700px; color: #fff; width: 77px; }
.yellow { background: #ffc107; color: #212529; width: 81px; }

.foot { display: flex; justify-content: space-between; color: #333; }
.foot > span { margin-top: 16px; letter-spacing: .08px; }
.pager { display: flex; margin-top: 5px; line-height: 55px; }
.prev { color: #666; width: 98px; }
.cur { width: 53px; height: 50px; border: 1px solid #979797; border-radius: 3px; background: linear-gradient(#fff, #dcdcdc); text-align: center; }
.pg { width: 56px; text-align: center; }
.next { padding: 0 20px 0 24px; }

/* taskbar */
.taskbar {
  height: 50px;
  display: flex;
  align-items: center;
  color: #fff;
  font-size: 14.500px;
  background: linear-gradient(90deg, #26231f 0, #26231f 40px, #3d3a3f 110px, #3d3a3f 190px, #262220 310px, #22221e 480px, #202225 720px, #24221f 930px, #3a2e26 1010px, #3a2e26 1150px, #23221f 1200px, #202220 1385px, #3e332a 1430px, #3e342b 1560px, #32221c 1700px, #2a2820 1800px, #2c2e22 1900px);
}
.tb-left { width: 879px; display: flex; gap: 39px; padding-left: 20px; }
.app { display: grid; place-items: center; width: 51px; height: 50px; border-bottom: 3px solid #6f94c9; }
.apps { display: flex; gap: 11px; }
.app.on { width: 61px; background: #655d58; margin-left: -5px; margin-right: -5px; }
.tray { margin-left: auto; display: flex; align-items: center; height: 50px; border-right: 1px solid #777; margin-right: 5px; padding-right: 25px; gap: 11px; }
.lang { margin-left: 3px; }
.clock { width: 80px; margin-left: 3px; display: flex; flex-direction: column; text-align: center; line-height: 23px; }
.note { margin-left: 8px; }
```
